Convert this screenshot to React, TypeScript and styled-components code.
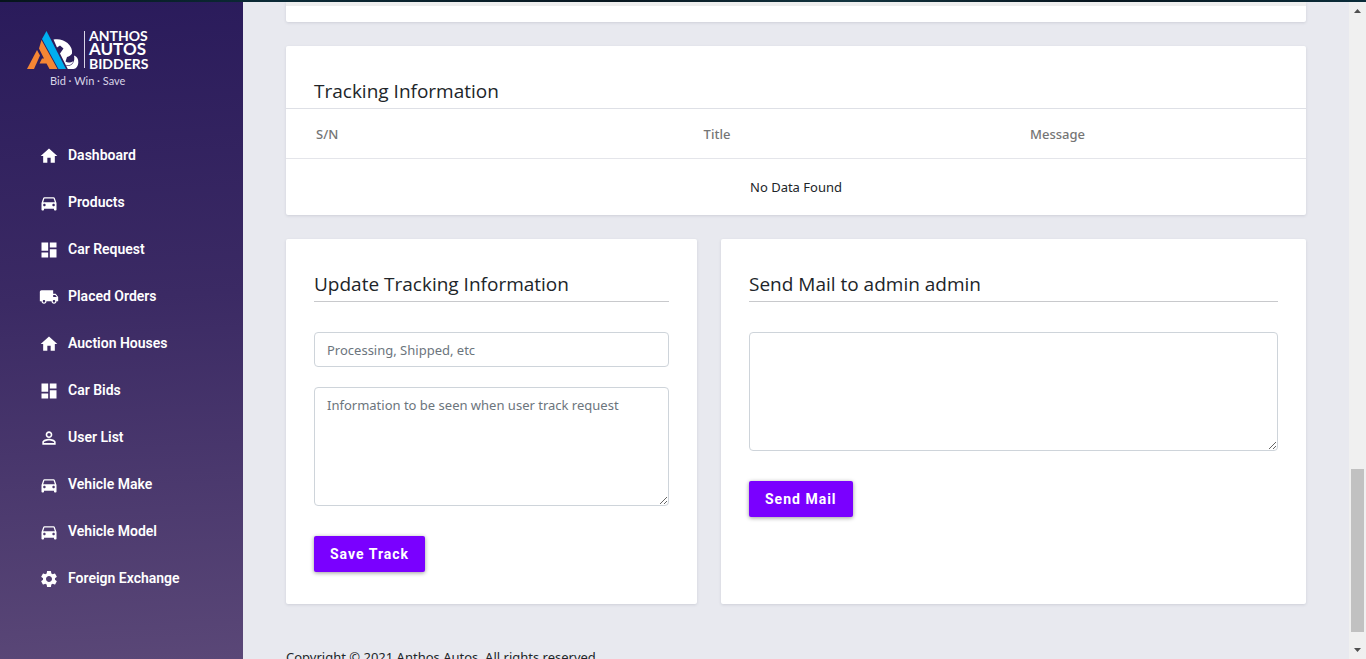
import React from "react";
import styled, { createGlobalStyle } from "styled-components";
import {
  MdHome,
  MdDirectionsCar,
  MdDashboard,
  MdLocalShipping,
  MdPersonOutline,
  MdSettings,
} from "react-icons/md";
import type { IconType } from "react-icons";

const bodyFont = `"Noto Sans", "Open Sans", sans-serif`;
const headingFont = `"Open Sans", "Noto Sans", sans-serif`;
const uiFont = `Roboto, "Liberation Sans", sans-serif`;

const GlobalStyle = createGlobalStyle`
  *, *::before, *::after { box-sizing: border-box; }
  body {
    margin: 0;
    overflow: hidden;
    background: #e8e9ef;
    color: #212529;
    font: 400 13px/20px ${bodyFont};
  }
`;

const Page = styled.div`
  display: flex;
  flex-direction: column;
  height: 100vh;
  overflow: hidden;
`;

const TopStrip = styled.div`
  flex: none;
  height: 2px;
  background: linear-gradient(90deg, #06141b, #0b2a36 20%, #07161f 45%, #12343f 62%, #06141d 80%, #0a2c39);
`;

const Shell = styled.div`
  display: flex;
  flex: 1;
  min-height: 0;
`;

const Sidebar = styled.aside`
  flex: none;
  width: 243px;
  padding-top: 24px;
  background: linear-gradient(177deg, #2a1b5b 0%, #3b2a64 45%, #5a4777 100%);
`;

const Brand = styled.a`
  display: block;
  padding-left: 24px;
  text-decoration: none;

  svg { display: block; }
`;

const Menu = styled.ul`
  margin: 35px 0 0;
  padding: 0;
  list-style: none;
`;

const MenuLink = styled.a`
  display: flex;
  align-items: center;
  gap: 9px;
  height: 47px;
  padding-left: 39px;
  color: #fff;
  font: 600 14px/20px ${uiFont};
  text-decoration: none;

  svg { flex: none; margin-top: 2px; }
`;

const Content = styled.main`
  flex: 1;
  min-width: 0;
  padding: 0 43px;
  overflow: hidden;
`;

const Card = styled.section`
  margin-bottom: 24px;
  border-radius: 2px;
  background: #fff;
  box-shadow: 0 1px 3px rgba(40, 44, 70, 0.13);
`;

const PreviousCard = styled(Card)`
  height: 20px;
  border-top: 4px solid #eee;
  border-radius: 0 0 2px 2px;
`;

const TableCard = styled(Card)`
  padding-top: 32px;
`;

const FormCard = styled(Card)<{ $span: number }>`
  grid-column: span ${(p) => p.$span};
  padding: 32px 28px;
`;

const Heading = styled.h2<{ $ruled?: boolean }>`
  margin: 0 0 ${(p) => (p.$ruled ? "30px" : "0")};
  padding: 0 ${(p) => (p.$ruled ? "0" : "28px")};
  border-bottom: ${(p) => (p.$ruled ? "1px solid #c8c9cc" : "0")};
  height: ${(p) => (p.$ruled ? "31px" : "30px")};
  font: 400 19px/26px ${headingFont};
`;

const Table = styled.table`
  width: 100%;
  border-collapse: collapse;
  table-layout: fixed;
`;

const HeadCell = styled.th<{ $width: string }>`
  width: ${(p) => p.$width};
  height: 50px;
  padding: 0 30px;
  border-top: 1px solid #dee0e6;
  border-bottom: 1px solid #e4e5ea;
  color: #757575;
  font-weight: 500;
  text-align: left;
`;

const EmptyCell = styled.td`
  height: 56px;
  padding: 0;
  text-align: center;
`;

const Row = styled.div`
  display: grid;
  grid-template-columns: repeat(12, minmax(0, 1fr));
  column-gap: 24px;
`;

const Field = styled.input`
  display: block;
  width: 100%;
  height: 35px;
  margin: 0 0 20px;
  padding: 7px 12px 5px;
  border: 1px solid #ced4da;
  border-radius: 4px;
  background: #fff;
  color: #495057;
  font: 400 13px/21px ${bodyFont};

  &::placeholder { color: #6c757d; opacity: 1; }
`;

const Area = styled(Field).attrs({ as: "textarea" })`
  height: 119px;
  margin-bottom: 30px;
  resize: vertical;
`;

const Button = styled.button`
  display: block;
  height: 36px;
  padding: 0 16px;
  border: 0;
  border-radius: 2px;
  background: #7a00ff;
  color: #fff;
  font: 700 14px/36px ${uiFont};
  letter-spacing: 1px;
  box-shadow: 0 1px 4px rgba(0, 0, 0, 0.4);
`;

const Footer = styled.footer`
  margin-top: 19px;
`;

const ScrollTrack = styled.div`
  display: flex;
  flex: none;
  flex-direction: column;
  align-items: center;
  width: 17px;
  padding: 7px 0;
  background: #f0f0f0;

  svg { flex: none; display: block; }
`;

const ScrollSpace = styled.div<{ $grow: number }>`
  flex: ${(p) => p.$grow} 0 0;
`;

const ScrollThumb = styled(ScrollSpace)`
  width: 13px;
  background: #c1c1c1;
`;

const menu: { label: string; icon: IconType }[] = [
  { label: "Dashboard", icon: MdHome },
  { label: "Products", icon: MdDirectionsCar },
  { label: "Car Request", icon: MdDashboard },
  { label: "Placed Orders", icon: MdLocalShipping },
  { label: "Auction Houses", icon: MdHome },
  { label: "Car Bids", icon: MdDashboard },
  { label: "User List", icon: MdPersonOutline },
  { label: "Vehicle Make", icon: MdDirectionsCar },
  { label: "Vehicle Model", icon: MdDirectionsCar },
  { label: "Foreign Exchange", icon: MdSettings },
];

const Logo = () => (
  <svg width="128" height="70" viewBox="24 26 128 70" role="img" aria-label="Anthos Autos Bidders">
    <path d="M53.500 39.500c5-1 10 0 14 3.500 3.500 3 5 7 4.500 10.500-1 2-3 3-5 3.500l-1.500 4.500c2 1.500 5 1.500 8-.5-1 3-3.500 4.500-7.500 4.500L60 53.500l3.500-5-3.500-3-3 2z" fill="#fff" />
    <path d="M74 55.500c3 1 4.500 3.500 4.300 7-.2 3.500-2 6.500-5 6.500h-5.500l-1.500-3c6 .5 9-4 7.700-10.500z" fill="#fff" />
    <path d="M41.500 40l16 29h-8l-3-5.500h-7l2.500-5h2l-5-10z" fill="#f58634" />
    <path d="M37 50l3 5.500L34 69h-7z" fill="#f58634" />
    <path d="M46.500 31l19.500 38h-7.500L42 39z" fill="#00aeef" />
    <path d="M84.500 31v37" stroke="#d8d4e6" strokeWidth="1" />
    <g fill="#fff" fontFamily="Lato, sans-serif" fontWeight="700">
      <text x="89" y="41" fontSize="14">ANTHOS</text>
      <text x="89" y="55" fontSize="17">AUTOS</text>
      <text x="89" y="69" fontSize="14">BIDDERS</text>
    </g>
    <text x="50" y="85" fill="#d8d4e6" fontFamily="Lato, sans-serif" fontSize="11" fontWeight="400">
      Bid · Win · Save
    </text>
  </svg>
);

export default function App() {
  return (
    <>
      <GlobalStyle />
      <Page>
        <TopStrip />
        <Shell>
          <Sidebar>
            <Brand href="#home">
              <Logo />
            </Brand>
            <nav aria-label="Main">
              <Menu>
                {menu.map(({ label, icon: Icon }) => (
                  <li key={label}>
                    <MenuLink href="#menu">
                      <Icon size={20} aria-hidden />
                      {label}
                    </MenuLink>
                  </li>
                ))}
              </Menu>
            </nav>
          </Sidebar>

          <Content>
            <PreviousCard />
            <TableCard>
              <Heading>Tracking Information</Heading>
              <Table>
                <thead>
                  <tr>
                    <HeadCell $width="38%">S/N</HeadCell>
                    <HeadCell $width="32%">Title</HeadCell>
                    <HeadCell $width="30%">Message</HeadCell>
                  </tr>
                </thead>
                <tbody>
                  <tr>
                    <EmptyCell colSpan={3}>No Data Found</EmptyCell>
                  </tr>
                </tbody>
              </Table>
            </TableCard>

            <Row>
              <FormCard $span={5}>
                <Heading $ruled>Update Tracking Information</Heading>
                <Field type="text" aria-label="Tracking status" placeholder="Processing, Shipped, etc" />
                <Area aria-label="Tracking message" placeholder="Information to be seen when user track request" />
                <Button type="button">Save Track</Button>
              </FormCard>
              <FormCard $span={7}>
                <Heading $ruled>Send Mail to admin admin</Heading>
                <Area aria-label="Mail message" />
                <Button type="button">Send Mail</Button>
              </FormCard>
            </Row>

            <Footer>Copyright © 2021 Anthos Autos. All rights reserved.</Footer>
          </Content>

          <ScrollTrack aria-hidden>
            <svg width="7" height="4" viewBox="0 0 7 4"><path d="M0 4L3.500 0 7 4z" fill="#505050" /></svg>
            <ScrollSpace $grow={456} />
            <ScrollThumb $grow={163} />
            <ScrollSpace $grow={16} />
            <svg width="7" height="4" viewBox="0 0 7 4"><path d="M0 0h7L3.500 4z" fill="#505050" /></svg>
          </ScrollTrack>
        </Shell>
      </Page>
    </>
  );
}
